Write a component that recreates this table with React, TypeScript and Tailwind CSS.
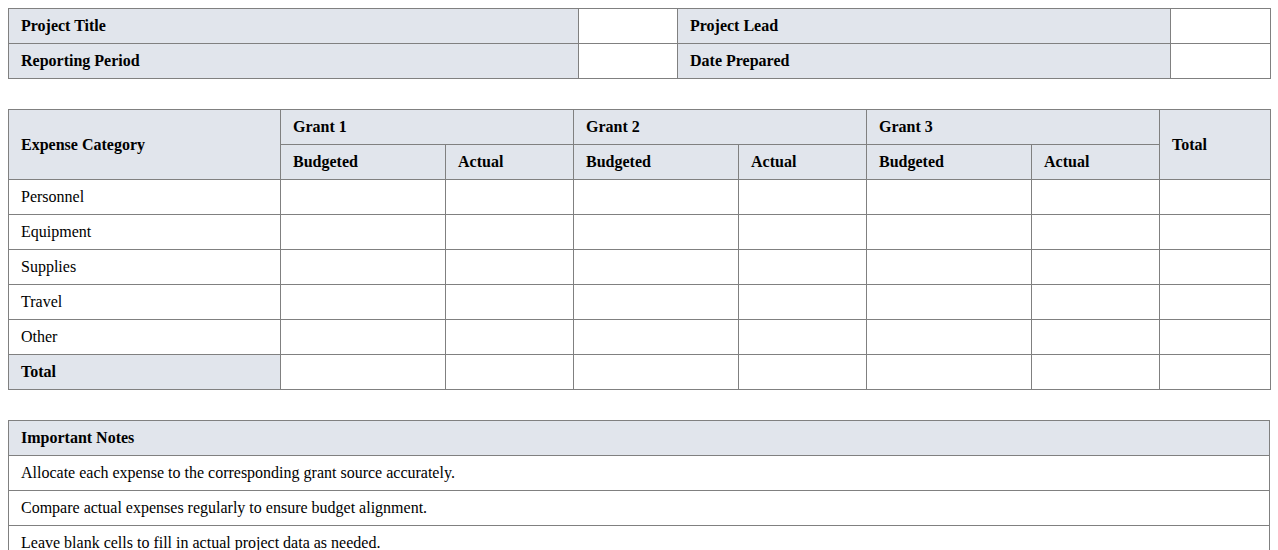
import React from "react";

const cell = "border border-[#808080] px-3 py-2 leading-[18px] text-left align-middle";
const hd = `${cell} bg-[#e1e5ec] font-bold`;
const td = `${cell} bg-white font-normal`;

export default function App() {
  const cats = ["Personnel", "Equipment", "Supplies", "Travel", "Other"];
  return (
    <div className="bg-white min-h-screen p-2 text-[16px] text-black" style={{ fontFamily: '"Liberation Serif", "Times New Roman", serif' }}>
      <table className="w-full table-fixed border-collapse mb-[30px]">
        <colgroup>
          <col className="w-[570px]" />
          <col className="w-[99px]" />
          <col className="w-[493px]" />
          <col className="w-[100px]" />
        </colgroup>
        <tbody>
          <tr>
            <th className={hd}>Project Title</th>
            <td className={td}></td>
            <th className={hd}>Project Lead</th>
            <td className={td}></td>
          </tr>
          <tr>
            <th className={hd}>Reporting Period</th>
            <td className={td}></td>
            <th className={hd}>Date Prepared</th>
            <td className={td}></td>
          </tr>
        </tbody>
      </table>

      <table className="w-full table-fixed border-collapse mb-[30px]">
        <colgroup>
          <col className="w-[272px]" />
          <col className="w-[165px]" />
          <col className="w-[128px]" />
          <col className="w-[165px]" />
          <col className="w-[128px]" />
          <col className="w-[165px]" />
          <col className="w-[128px]" />
          <col className="w-[111px]" />
        </colgroup>
        <thead>
          <tr>
            <th rowSpan={2} className={hd}>Expense Category</th>
            <th colSpan={2} className={hd}>Grant 1</th>
            <th colSpan={2} className={hd}>Grant 2</th>
            <th colSpan={2} className={hd}>Grant 3</th>
            <th rowSpan={2} className={hd}>Total</th>
          </tr>
          <tr>
            <th className={hd}>Budgeted</th>
            <th className={hd}>Actual</th>
            <th className={hd}>Budgeted</th>
            <th className={hd}>Actual</th>
            <th className={hd}>Budgeted</th>
            <th className={hd}>Actual</th>
          </tr>
        </thead>
        <tbody>
          {cats.map((c) => (
            <tr key={c}>
              <td className={td}>{c}</td>
              <td className={td}></td>
              <td className={td}></td>
              <td className={td}></td>
              <td className={td}></td>
              <td className={td}></td>
              <td className={td}></td>
              <td className={td}></td>
            </tr>
          ))}
          <tr>
            <th className={hd}>Total</th>
            <td className={td}></td>
            <td className={td}></td>
            <td className={td}></td>
            <td className={td}></td>
            <td className={td}></td>
            <td className={td}></td>
            <td className={td}></td>
          </tr>
        </tbody>
      </table>

      <table className="w-full border-collapse">
        <tbody>
          <tr>
            <th className={hd}>Important Notes</th>
          </tr>
          <tr>
            <td className={td}>Allocate each expense to the corresponding grant source accurately.</td>
          </tr>
          <tr>
            <td className={td}>Compare actual expenses regularly to ensure budget alignment.</td>
          </tr>
          <tr>
            <td className={td}>Leave blank cells to fill in actual project data as needed.</td>
          </tr>
        </tbody>
      </table>
    </div>
  );
}
